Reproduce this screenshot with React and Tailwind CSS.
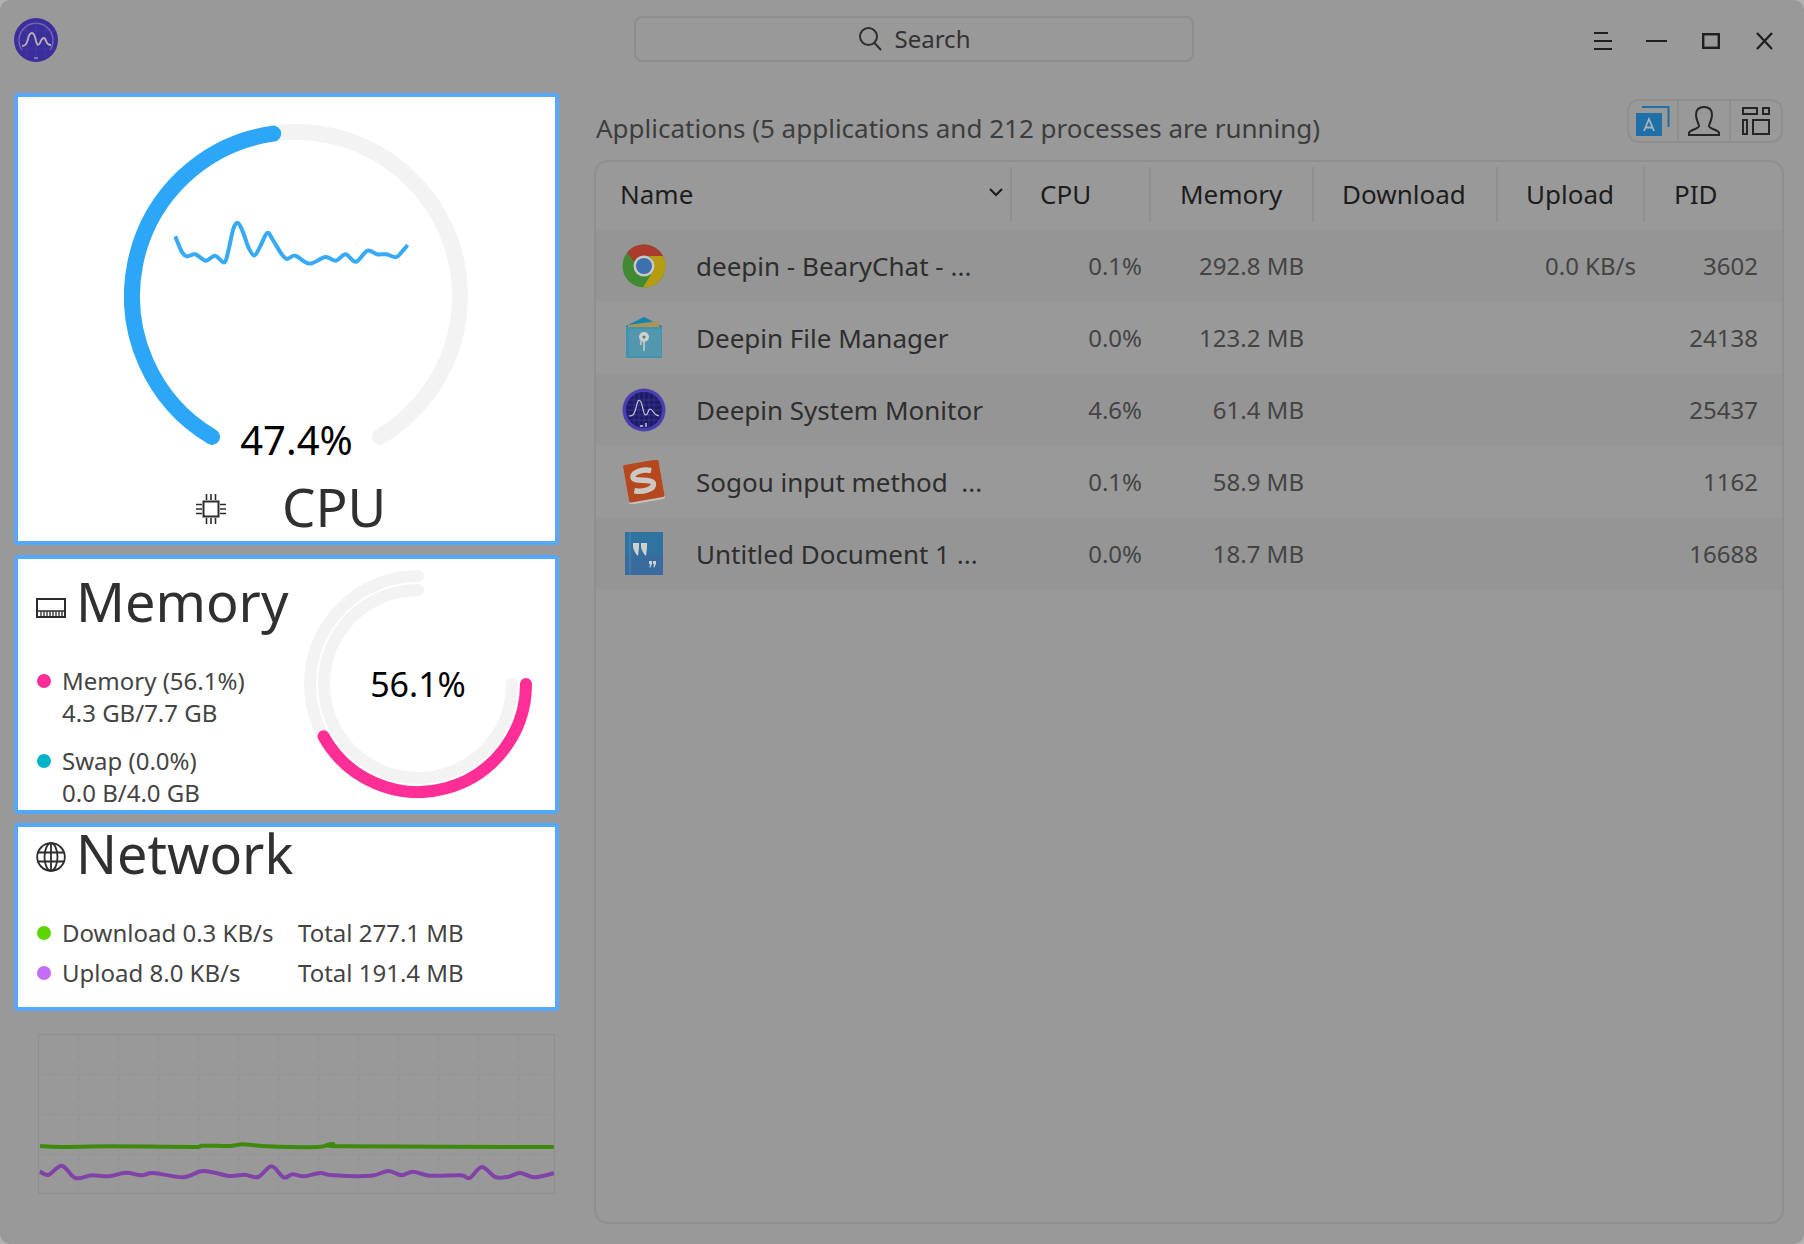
const smooth = (pts) => {
  let d = `M${pts[0][0].toFixed(1)} ${pts[0][1].toFixed(1)}`;
  for (let i = 0; i < pts.length - 1; i++) {
    const p0 = pts[i - 1] || pts[i], p1 = pts[i], p2 = pts[i + 1], p3 = pts[i + 2] || p2;
    const c1 = [p1[0] + (p2[0] - p0[0]) / 6, p1[1] + (p2[1] - p0[1]) / 6];
    const c2 = [p2[0] - (p3[0] - p1[0]) / 6, p2[1] - (p3[1] - p1[1]) / 6];
    d += `C${c1[0].toFixed(1)} ${c1[1].toFixed(1)} ${c2[0].toFixed(1)} ${c2[1].toFixed(1)} ${p2[0].toFixed(1)} ${p2[1].toFixed(1)}`;
  }
  return d;
};

const spark = [[458,662],[475,705],[488,718],[510,712],[538,730],[562,716],[585,735],[595,710],[610,640],[622,625],[635,650],[650,695],[665,715],[680,690],[698,652],[712,670],[735,710],[750,725],[772,716],[808,738],[850,720],[878,730],[903,712],[930,733],[960,702],[985,712],[1010,712],[1035,720],[1050,705],[1065,686]]
  .map(([x, y]) => [x / 2.613 - 124, y / 2.8 - 124]);

const greenPts = [[105,409],[160,412],[290,410],[500,412],[530,408],[600,409],[635,404],[700,410],[830,412],[870,403],[905,410],[1448,412]]
  .map(([x, y]) => [(x - 100) / 2.613, (y - 73) / 3]);
const purplePts = [[105,485],[127,496],[162,468],[198,505],[240,497],[285,500],[330,489],[370,497],[402,490],[480,503],[532,484],[600,499],[640,495],[675,502],[710,470],[742,503],[765,494],[795,500],[838,490],[870,497],[970,498],[1015,484],[1050,497],[1080,486],[1125,498],[1205,497],[1228,505],[1260,472],[1295,502],[1330,501],[1360,490],[1397,503],[1448,491]]
  .map(([x, y]) => [(x - 100) / 2.613, (y - 73) / 3]);

const polar = (cx, cy, r, deg) => [cx + r * Math.cos((deg * Math.PI) / 180), cy + r * Math.sin((deg * Math.PI) / 180)];
const arc = (cx, cy, r, a0, a1) => {
  const [x0, y0] = polar(cx, cy, r, a0);
  const [x1, y1] = polar(cx, cy, r, a1);
  return `M${x0} ${y0}A${r} ${r} 0 ${a1 - a0 > 180 ? 1 : 0} 1 ${x1} ${y1}`;
};

const CpuGauge = () => (
  <svg width="344" height="344" viewBox="0 0 344 344" className="block">
    <path d={arc(172, 172, 164, 120.8, 419.2)} fill="none" stroke="#f3f3f3" strokeWidth="16" strokeLinecap="round" />
    <path d={arc(172, 172, 164, 120.8, 262)} fill="none" stroke="#2ca7f8" strokeWidth="16" strokeLinecap="round" />
    <path d={smooth(spark)} fill="none" stroke="#36aaf6" strokeWidth="4" />
  </svg>
);

const MemGauge = () => (
  <svg width="228" height="228" viewBox="0 0 228 228" className="block">
    <path d={arc(114, 114, 108, 0, 270)} fill="none" stroke="#f3f3f3" strokeWidth="12" strokeLinecap="round" />
    <path d={arc(114, 114, 94, 0, 270)} fill="none" stroke="#f3f3f3" strokeWidth="12" strokeLinecap="round" />
    <path d={arc(114, 114, 108, 0, 151)} fill="none" stroke="#ff2d96" strokeWidth="12" strokeLinecap="round" />
  </svg>
);

const CpuIcon = () => (
  <svg width="30" height="30" viewBox="0 0 30 30" fill="none" stroke="#2c2c2c" strokeWidth="1.6">
    <rect x="7.5" y="7.5" width="15" height="15" strokeWidth="2" />
    <path d="M10.5 0v6M15 0v6M19.5 0v6M10.5 24v6M15 24v6M19.5 24v6M0 10.5h6M0 15h6M0 19.5h6M24 10.5h6M24 15h6M24 19.5h6" />
  </svg>
);
const MemIcon = () => (
  <svg width="30" height="20" viewBox="0 0 30 20" fill="none" stroke="#2c2c2c">
    <rect x="1" y="1" width="28" height="18" strokeWidth="2" />
    <path d="M1 13h28" strokeWidth="1.5" />
    <path d="M5 13v6M8 13v6M11 13v6M14 13v6M17 13v6M20 13v6M23 13v6M26 13v6" strokeWidth="1.3" />
  </svg>
);
const GlobeIcon = () => (
  <svg width="30" height="30" viewBox="0 0 30 30" fill="none" stroke="#2c2c2c" strokeWidth="1.8">
    <circle cx="15" cy="15" r="13.8" />
    <ellipse cx="15" cy="15" rx="6.5" ry="13.8" />
    <path d="M15 1v28M1.5 10.5h27M1.5 19.5h27" />
  </svg>
);

const AppLogo = () => (
  <svg width="44" height="44" viewBox="0 0 44 44" fill="none">
    <circle cx="22" cy="22" r="22" fill="#3b2d9b" />
    <path d="M8 32A17 17 0 1 1 36 32" stroke="#6f68b0" strokeWidth="1.5" />
    <path d="M13 3v38M22 1v42M31 3v38M3 13h38M1 22h42M3 31h38" stroke="#4a3fa8" strokeWidth=".6" />
    <path d="M8 28C12 28 13 25 14 21C15 16 16 15 18 15C20 15 21 18 22 23C23 27 24 28 26 25C27 22 28 20 30 20C32 20 32 25 34 26C35 27 36 27 37 27" stroke="#b8b3b0" strokeWidth="1.8" />
    <path d="M20 40h4" stroke="#a8a4c8" strokeWidth="1.2" />
  </svg>
);

const ChromeIcon = () => (
  <svg width="44" height="44" viewBox="0 0 44 44">
    <circle cx="22" cy="22" r="21.5" fill="#3f8a33" />
    <path d="M22 .5A21.5 21.5 0 0 1 41 12H22C17 12 13 15 12 18L5 8.5A21.5 21.5 0 0 1 22 .5Z" fill="#a93b2f" />
    <path d="M41 12A21.5 21.5 0 0 1 21 43.5L31 27C33 23 32 15 27 12Z" fill="#b59c10" />
    <circle cx="22" cy="22" r="10.5" fill="#c8c8c8" />
    <circle cx="22" cy="22" r="8" fill="#3d70ad" />
  </svg>
);
const FolderIcon = () => (
  <svg width="44" height="44" viewBox="0 0 44 44">
    <path d="M4 10L22 1L40 10V42H4Z" fill="#1185ad" />
    <path d="M6 9L36 5L38 12H6Z" fill="#ab9455" />
    <rect x="4" y="11" width="36" height="31" fill="#3f95b1" />
    <rect x="7" y="13" width="32" height="27" fill="#5297ae" />
    <circle cx="22" cy="21" r="5" fill="#cfcfcf" />
    <circle cx="22" cy="21" r="1.6" fill="#5a7d8c" />
    <path d="M22 25v10M19 25v4" stroke="#c8c8c8" strokeWidth="1.6" />
  </svg>
);
const MonitorIcon = () => (
  <svg width="44" height="44" viewBox="0 0 44 44" fill="none">
    <circle cx="22" cy="22" r="21.5" fill="#4b3fb0" />
    <circle cx="22" cy="22" r="18" fill="#1e1c68" />
    <path d="M12 7v30M17 5v34M22 4v36M27 5v34M32 7v30M7 12h30M5 17h34M4 22h36M5 27h34M7 32h30" stroke="#3f3b95" strokeWidth=".7" />
    <path d="M7 28C11 28 12 27 14 20C16 11 17 11 19 14C21 18 21 27 24 27C26 27 26 21 28 21C31 21 31 27 37 28" stroke="#d2d2d2" strokeWidth="1.1" />
    <path d="M18 38h3M24 35v4" stroke="#d2d2d2" strokeWidth="1.4" />
  </svg>
);
const SogouIcon = () => (
  <svg width="44" height="44" viewBox="0 0 44 44">
    <g transform="rotate(-10 22 22)">
      <rect x="4" y="4" width="36" height="38" rx="2" fill="#c4c3c1" />
      <rect x="4" y="2" width="36" height="38" rx="2" fill="#b5481e" />
      <path d="M31 12C24 9 13 10 12 15C11 21 30 19 31 25C31 31 19 32 11 29" fill="none" stroke="#cbc7c2" strokeWidth="5.5" />
    </g>
  </svg>
);
const DocIcon = () => (
  <svg width="44" height="44" viewBox="0 0 44 44">
    <rect x="3" y="0" width="38" height="43" fill="#2f73a0" />
    <rect x="3" y="22" width="38" height="21" fill="#386c9e" />
    <path d="M8 0v43" stroke="#5d95bb" strokeWidth=".7" />
    <path d="M11 11h6v5l-1 8l-2-2c-1-2-3-5-3-7ZM19 11h6v5l-1 8l-2-2c-1-2-3-5-3-7Z" fill="#cfcfcf" />
    <path d="M27 29h3v3l-2 4l-.5-1l.5-3h-1ZM31 29h3v3l-2 4l-.5-1l.5-3h-1Z" fill="#cfcfcf" />
  </svg>
);

const rows = [
  { Icon: ChromeIcon, name: "deepin - BearyChat - ...", cpu: "0.1%", mem: "292.8 MB", up: "0.0 KB/s", pid: "3602" },
  { Icon: FolderIcon, name: "Deepin File Manager", cpu: "0.0%", mem: "123.2 MB", up: "", pid: "24138" },
  { Icon: MonitorIcon, name: "Deepin System Monitor", cpu: "4.6%", mem: "61.4 MB", up: "", pid: "25437" },
  { Icon: SogouIcon, name: "Sogou input method  ...", cpu: "0.1%", mem: "58.9 MB", up: "", pid: "1162" },
  { Icon: DocIcon, name: "Untitled Document 1 ...", cpu: "0.0%", mem: "18.7 MB", up: "", pid: "16688" },
];

const Dot = ({ className }) => <span className={`block w-[14px] h-[14px] rounded-full shrink-0 ${className}`} />;

const HeadCell = ({ children, pad, divider = true }) => (
  <div className={`relative flex items-center h-full pb-[4px] ${pad}`}>
    {children}
    {divider && <span className="absolute right-0 top-[5px] bottom-[8px] w-[2px] bg-[#8f8f8f]" />}
  </div>
);

export default function App() {
  return (
    <div className="w-[1804px] h-[1244px] bg-[#b2b2b2] overflow-hidden" style={{ fontFamily: '"Noto Sans", sans-serif' }}>
      <div className="w-full h-full bg-[#999999] rounded-[10px] flex flex-col">
        {/* title bar */}
        <div className="h-[80px] shrink-0 flex items-center relative">
          <div className="ml-[14px]"><AppLogo /></div>
          <div className="ml-[576px] -mt-[2px] w-[560px] h-[46px] rounded-[8px] border-2 border-[#8d8d8d] flex items-center justify-center gap-[13px] text-[24px] text-[#333333]">
            <svg width="24" height="26" viewBox="0 0 24 26" fill="none" stroke="#2e2e2e" strokeWidth="2">
              <circle cx="10.5" cy="10.5" r="8.5" /><path d="M16.5 17L23 24" />
            </svg>
            <span>Search</span>
          </div>
          <div className="ml-[400px] mt-[2px] flex items-center">
            <svg width="18" height="18" viewBox="0 0 18 18" stroke="#1f1f1f" strokeWidth="2"><path d="M0 1h14M0 9h18M0 17h18" /></svg>
            <svg width="21" height="18" viewBox="0 0 21 18" stroke="#1f1f1f" strokeWidth="2" className="ml-[34px]"><path d="M0 9h21" /></svg>
            <svg width="18" height="16" viewBox="0 0 18 16" fill="none" stroke="#1f1f1f" strokeWidth="2.4" className="ml-[35px]"><rect x="1.200" y="1.200" width="15.600" height="13.600" /></svg>
            <svg width="17" height="18" viewBox="0 0 17 18" stroke="#1f1f1f" strokeWidth="2.200" className="ml-[36px] -mt-[1px]"><path d="M1 1l15 16M16 1L1 17" /></svg>
          </div>
        </div>

        <div className="flex flex-1 min-h-0">
          {/* left column */}
          <div className="w-[594px] shrink-0 pl-[14px] pt-[13px]">
            <div className="w-[545px] h-[452px] bg-white border-4 border-[#55a8ff] rounded-[4px]">
              <div className="relative ml-[106px] pt-[27px] w-[344px] h-[371px]">
                <CpuGauge />
                <div className="absolute left-[1px] right-0 top-[315px] text-center text-[40px] leading-[56px] text-black">47.4%</div>
              </div>
              <div className="mt-[7px] ml-[178px] h-[64px] flex items-center">
                <span className="mt-[4px]"><CpuIcon /></span>
                <span className="ml-[56px] text-[53px] leading-[64px] text-[#303030]">CPU</span>
              </div>
            </div>

            <div className="mt-[10px] w-[545px] h-[259px] bg-white border-4 border-[#55a8ff] rounded-[4px] flex overflow-hidden">
              <div className="w-[286px] shrink-0 pl-[18px] pt-[12px]">
                <div className="h-[60px] flex items-center gap-[10px]">
                  <span className="mt-[14px]"><MemIcon /></span>
                  <span className="text-[54px] leading-[60px] text-[#303030]">Memory</span>
                </div>
                <div className="mt-[34px] ml-[1px] flex items-center gap-[11px]"><Dot className="bg-[#ff2d96]" /><span className="text-[24px] leading-[32px] text-[#444444]">Memory (56.1%)</span></div>
                <div className="ml-[1px] pl-[25px] text-[24px] leading-[32px] text-[#444444]">4.3 GB/7.7 GB</div>
                <div className="mt-[16px] ml-[1px] flex items-center gap-[11px]"><Dot className="bg-[#00b4c8]" /><span className="text-[24px] leading-[32px] text-[#444444]">Swap (0.0%)</span></div>
                <div className="ml-[1px] pl-[25px] text-[24px] leading-[32px] text-[#444444]">0.0 B/4.0 GB</div>
              </div>
              <div className="relative mt-[11px] w-[228px] h-[228px]">
                <MemGauge />
                <div className="absolute inset-0 flex items-center justify-center text-[34px] text-black">56.1%</div>
              </div>
            </div>

            <div className="mt-[9px] w-[545px] h-[188px] bg-white border-4 border-[#55a8ff] rounded-[4px] pl-[18px]">
              <div className="h-[54px] -mt-[1px] flex items-center gap-[10px]">
                <span className="mt-[8px]"><GlobeIcon /></span>
                <span className="text-[54px] leading-[54px] text-[#303030]">Network</span>
              </div>
              <div className="mt-[33px] ml-[1px] h-[40px] flex items-center text-[24px] text-[#444444]">
                <Dot className="bg-[#5bd600]" />
                <span className="ml-[11px] w-[236px]">Download 0.3 KB/s</span>
                <span>Total 277.1 MB</span>
              </div>
              <div className="ml-[1px] h-[40px] flex items-center text-[24px] text-[#444444]">
                <Dot className="bg-[#c26cf8]" />
                <span className="ml-[11px] w-[236px]">Upload 8.0 KB/s</span>
                <span>Total 191.4 MB</span>
              </div>
            </div>

            <div className="mt-[23px] ml-[24px] w-[517px] h-[160px]">
              <svg width="517" height="160" viewBox="0 0 517 160" fill="none" className="block">
                <rect x=".5" y=".5" width="516" height="159" stroke="#8e8e8e" />
                {[40, 80, 120].map((y) => <path key={y} d={`M1 ${y}.5H516`} stroke="#929292" strokeDasharray="6 4" />)}
                {[40, 80, 120, 160, 200, 240, 280, 320, 360, 400, 440, 480].map((x) => <path key={x} d={`M${x}.5 1V159`} stroke="#929292" strokeDasharray="6 4" />)}
                <path d={smooth(greenPts)} stroke="#3f8a0c" strokeWidth="4" />
                <path d={smooth(purplePts)} stroke="#8243a8" strokeWidth="4" />
              </svg>
            </div>
          </div>

          {/* right column */}
          <div className="w-[1190px] shrink-0">
            <div className="h-[80px] flex items-start justify-between">
              <div className="ml-[2px] mt-[28px] text-[26px] leading-[40px] text-[#3d3d3d]">Applications (5 applications and 212 processes are running)</div>
              <div className="mt-[19px] mr-[1px] h-[44px] w-[156px] rounded-[12px] border-2 border-[#8f8f8f] flex items-center">
                <div className="w-[50px] h-full border-r-2 border-[#8f8f8f] flex items-center justify-center">
                  <svg width="34" height="30" viewBox="0 0 34 30" fill="none">
                    <path d="M6 1h26.500v20" stroke="#1f6fa8" strokeWidth="2" />
                    <rect x="0" y="7" width="26" height="23" fill="#1f6fa8" />
                    <path d="M8 25l5-12l5 12M9.500 21.500h7" stroke="#a5b3bd" strokeWidth="1.800" />
                  </svg>
                </div>
                <div className="w-[52px] h-full border-r-2 border-[#8f8f8f] flex items-center justify-center">
                  <svg width="32" height="30" viewBox="0 0 32 30" fill="none" stroke="#252525" strokeWidth="2">
                    <path d="M1 29h30v-2c0-3-10-4-10-7c0-2 3-6 3-11c0-5-3-8-8-8s-8 3-8 8c0 5 3 9 3 11c0 3-10 4-10 7Z" />
                  </svg>
                </div>
                <div className="flex-1 h-full flex items-center justify-center">
                  <svg width="28" height="28" viewBox="0 0 28 28" fill="none" stroke="#252525" strokeWidth="2">
                    <rect x="1" y="1" width="14" height="6" /><rect x="21" y="1" width="6" height="6" />
                    <rect x="1" y="13" width="4" height="14" /><rect x="11" y="13" width="16" height="14" />
                  </svg>
                </div>
              </div>
            </div>

            <div className="h-[1064px] w-[1190px] rounded-[14px] border-2 border-[#8f8f8f] overflow-hidden">
              <div className="h-[68px] grid grid-cols-[416px_139px_163px_184px_147px_137px] items-stretch text-[26px] text-[#1d1d1d]">
                <HeadCell pad="pl-[24px] justify-between pr-[6px]">
                  <span>Name</span>
                  <svg width="16" height="12" viewBox="0 0 16 12" fill="none" stroke="#1d1d1d" strokeWidth="2.200" className="mr-[2px] -mt-[2px]"><path d="M2 2l6 6l6-6" /></svg>
                </HeadCell>
                <HeadCell pad="pl-[28px]">CPU</HeadCell>
                <HeadCell pad="pl-[29px]">Memory</HeadCell>
                <HeadCell pad="pl-[28px]">Download</HeadCell>
                <HeadCell pad="pl-[28px]">Upload</HeadCell>
                <HeadCell pad="pl-[29px]" divider={false}>PID</HeadCell>
              </div>
              {rows.map(({ Icon, name, cpu, mem, up, pid }, i) => (
                <div key={pid} className={`h-[72px] grid grid-cols-[416px_139px_163px_184px_147px_137px] items-center text-[24px] text-[#444444] ${i % 2 === 0 ? "bg-[#959595]" : ""}`}>
                  <div className="flex items-center pl-[26px] text-[26px] text-[#2e2e2e]">
                    <span className="w-[44px] h-[44px] block shrink-0"><Icon /></span>
                    <span className="ml-[30px] whitespace-pre">{name}</span>
                  </div>
                  <div className="text-right pr-[9px]">{cpu}</div>
                  <div className="text-right pr-[10px]">{mem}</div>
                  <div />
                  <div className="text-right pr-[9px] -ml-[100px]">{up}</div>
                  <div className="text-right pr-[24px]">{pid}</div>
                </div>
              ))}
            </div>
          </div>
        </div>
      </div>
    </div>
  );
}
